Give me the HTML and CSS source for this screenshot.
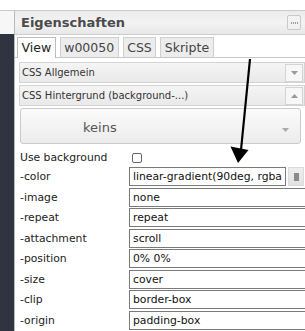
FILE: index.html
```html
<!DOCTYPE html>
<html>
<head>
<meta charset="utf-8">
<link rel="stylesheet" href="styles.css">
</head>
<body>
<div class="topbar"></div>
<div class="main">
  <div class="sidebar"><div class="sidebar-top"></div></div>
  <div class="panel">
    <div class="panel-header">
      <span class="title">Eigenschaften</span>
      <span class="hbtn"><svg width="7" height="2" viewBox="0 0 7 2"><rect x="0" y="0" width="1" height="2" fill="#999"/><rect x="2" y="0" width="1" height="2" fill="#999"/><rect x="4" y="0" width="1" height="2" fill="#999"/><rect x="6" y="0" width="1" height="2" fill="#999"/></svg></span>
    </div>
    <div class="tabs">
      <span class="tab active">View</span>
      <span class="tab">w00050</span>
      <span class="tab">CSS</span>
      <span class="tab">Skripte</span>
    </div>
    <div class="content">
      <div class="acc">
        <span>CSS Allgemein</span>
        <span class="acc-icon"><svg width="7" height="4" viewBox="0 0 7 4"><polygon points="0,0 7,0 3.5,4" fill="#999"/></svg></span>
      </div>
      <div class="acc acc2">
        <span>CSS Hintergrund (background-...)</span>
        <span class="acc-icon"><svg width="7" height="4" viewBox="0 0 7 4"><polygon points="0,4 7,4 3.5,0" fill="#999"/></svg></span>
      </div>
      <div class="select">
        <span class="select-text">keins</span>
        <svg class="select-arrow" width="7" height="4" viewBox="0 0 7 4"><polygon points="0,0 7,0 3.5,4" fill="#aaa"/></svg>
      </div>
      <div class="form">
        <span class="label">Use background</span>
        <span class="cell"><span class="check"></span></span>

        <span class="label">-color</span>
        <span class="cell"><span class="input input-color">linear-gradient(90deg, rgba</span><span class="cbtn"><span class="cbtn-sq"></span></span></span>

        <span class="label">-image</span>
        <span class="cell"><span class="input">none</span></span>

        <span class="label">-repeat</span>
        <span class="cell"><span class="input">repeat</span></span>

        <span class="label">-attachment</span>
        <span class="cell"><span class="input">scroll</span></span>

        <span class="label">-position</span>
        <span class="cell"><span class="input">0% 0%</span></span>

        <span class="label">-size</span>
        <span class="cell"><span class="input">cover</span></span>

        <span class="label">-clip</span>
        <span class="cell"><span class="input">border-box</span></span>

        <span class="label">-origin</span>
        <span class="cell"><span class="input">padding-box</span></span>
      </div>
      <div class="bottom-line"></div>
    </div>
  </div>
</div>
<svg class="arrow" width="305" height="331" viewBox="0 0 305 331">
  <line x1="250" y1="59" x2="241" y2="150" stroke="#000" stroke-width="2.2"/>
  <polygon points="230.5,146.5 248.5,150 238,163" fill="#000"/>
</svg>
</body>
</html>
```

FILE: styles.css
```css
html, body {
  margin: 0;
  padding: 0;
}
body {
  width: 305px;
  height: 331px;
  overflow: hidden;
  position: relative;
  background: #fff;
  font-family: "DejaVu Sans", Verdana, sans-serif;
  color: #222;
}
.topbar {
  height: 10px;
  border-bottom: 1px solid #cbcbcb;
}
.main {
  display: flex;
  height: 320px;
}
.sidebar {
  width: 14px;
  flex: none;
  background: #2f3440;
}
.sidebar-top {
  height: 23px;
  background: #f7f7f7;
}
.panel {
  flex: 1;
  min-width: 0;
  overflow: hidden;
  border-left: 1px solid #b9b9b9;
}
.panel-header {
  height: 23px;
  border-bottom: 1px solid #cdcdcd;
  background: linear-gradient(#ebebeb, #f3f3f3 50%, #e8e8e8);
  display: flex;
  align-items: center;
  justify-content: space-between;
  padding: 0 4px 0 6px;
}
.title {
  font-weight: bold;
  font-size: 13px;
  color: #4b4b4b;
}
.hbtn {
  width: 12px;
  height: 13px;
  border: 1px solid #c9c9c9;
  border-radius: 2px;
  background: #f2f2f2;
  display: flex;
  align-items: center;
  justify-content: center;
}
.tabs {
  display: flex;
  gap: 4px;
  padding: 2px 0 0 2px;
  height: 20px;
  border-bottom: 1px solid #c6c6c6;
}
.tab {
  height: 20px;
  box-sizing: border-box;
  border: 1px solid #cfcfcf;
  border-bottom: none;
  background: #ececec;
  padding: 0 3.5px;
  font-size: 12.5px;
  line-height: 20px;
  color: #444;
}
.tab.active {
  background: #fff;
  border-color: #bdbdbd;
  height: 21px;
  color: #222;
}
.content {
  padding: 4px 0 0 4px;
}
.acc {
  height: 19px;
  border: 1px solid #d3d3d3;
  background: linear-gradient(#f5f5f5, #e9e9e9);
  display: flex;
  align-items: center;
  justify-content: space-between;
  padding-left: 2px;
  font-size: 10px;
  color: #333;
}
.acc2 {
  margin-top: 2px;
}
.acc-icon {
  width: 16px;
  height: 16px;
  margin-right: 1px;
  border: 1px solid #d4d4d4;
  background: #f7f7f7;
  display: flex;
  align-items: center;
  justify-content: center;
}
.select {
  margin: 2px 4px 0 1px;
  height: 32px;
  border: 1px solid #cacaca;
  border-radius: 3px;
  background: linear-gradient(#fbfbfb, #ececec);
  display: flex;
  align-items: center;
  justify-content: space-between;
  padding: 2px 11px 0 62px;
}
.select-text {
  font-size: 13px;
  color: #555;
}
.select-arrow {
  margin-top: 6px;
}
.form {
  margin: 5.5px 0 0 1px;
  display: grid;
  grid-template-columns: 109px 1fr;
  grid-template-rows: 16px repeat(8, 19px);
  row-gap: 1.5px;
}
.label {
  font-size: 10.8px;
  color: #222;
  display: flex;
  align-items: center;
}
.cell {
  display: flex;
  align-items: center;
  min-width: 0;
}
.check {
  width: 8px;
  height: 8px;
  margin-left: 3px;
  border: 1px solid #666;
  border-radius: 2px;
  background: #fff;
}
.input {
  box-sizing: border-box;
  height: 19px;
  width: 220px;
  flex: none;
  border: 1px solid #7a7a7a;
  background: #fff;
  padding-left: 3px;
  font-size: 10.8px;
  line-height: 17px;
  color: #111;
  white-space: nowrap;
  overflow: hidden;
}
.input-color {
  width: 157px;
}
.cbtn {
  box-sizing: border-box;
  margin-left: 2px;
  width: 16px;
  height: 19px;
  flex: none;
  border: 1px solid #dcdcdc;
  background: linear-gradient(#eeeeee, #e2e2e2);
  display: flex;
  align-items: center;
  justify-content: center;
}
.cbtn-sq {
  width: 5px;
  height: 8px;
  background: #8a8a8a;
}
.bottom-line {
  margin-top: 2px;
  border-top: 2px solid #d6d6d6;
}
.arrow {
  position: absolute;
  left: 0;
  top: 0;
  pointer-events: none;
}
```
